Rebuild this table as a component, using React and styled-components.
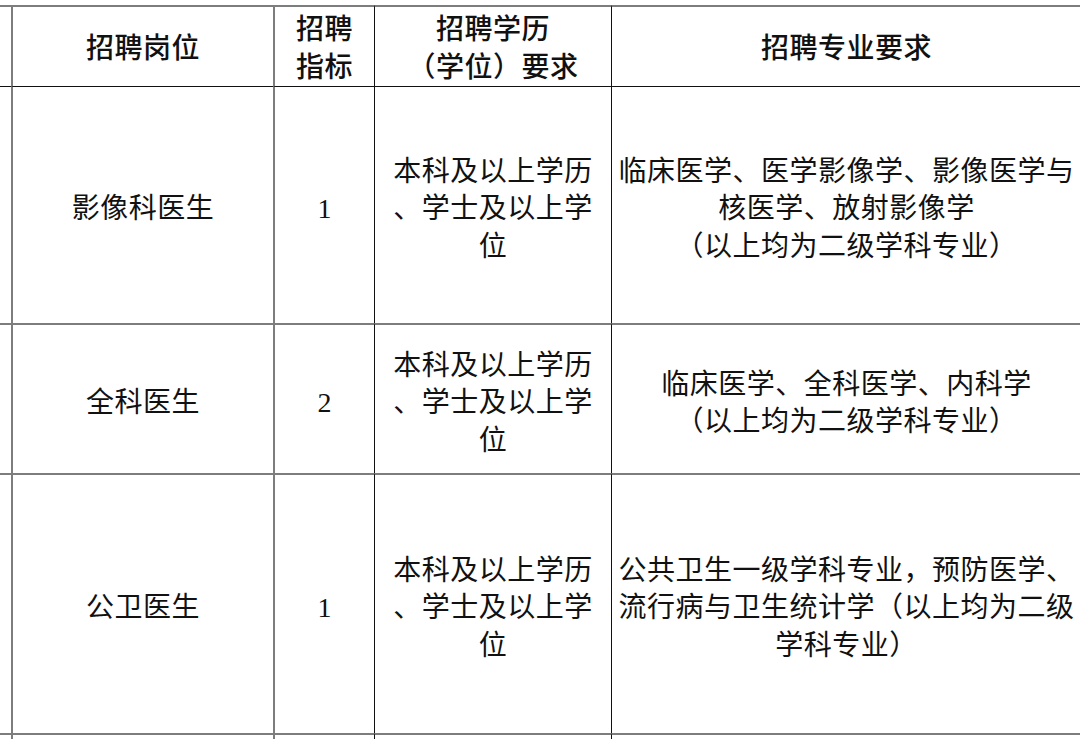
import React from 'react'
import styled, { createGlobalStyle } from 'styled-components'

const GlobalStyle = createGlobalStyle`
  html, body {
    margin: 0;
    padding: 0;
    background: #fff;
    overflow: hidden;
  }
`

const GRAY = '2px solid #7d7d7d'
const DARK = '1px solid #111'

const Sheet = styled.div`
  display: grid;
  grid-template-columns: 11px 262px 101px 237px 470px;
  grid-template-rows: 81px 237px 150px 260px 6px;
  margin-top: 5px;
  width: 1081px;
  overflow: hidden;
`

const Cell = styled.div`
  box-sizing: border-box;
  display: flex;
  align-items: center;
  justify-content: center;
  text-align: center;
  white-space: nowrap;
  color: #111;
  padding-top: ${(p) => (p.$head ? '0' : '8px')};
  border-left: ${(p) => p.$left || 'none'};
  border-top: ${(p) => p.$top || 'none'};
  font-family: ${(p) =>
    p.$head
      ? '"Noto Sans CJK SC", "Noto Sans", sans-serif'
      : '"Liberation Serif", "Noto Sans CJK SC", serif'};
  font-weight: ${(p) => (p.$head ? 500 : 400)};
  font-size: 28px;
  line-height: 37.5px;
  letter-spacing: ${(p) => (p.$num ? '0' : '0.5px')};
`

const colBorders = [null, GRAY, GRAY, DARK, DARK]
const rowBorders = [GRAY, DARK, GRAY, GRAY, GRAY]

const lines = (arr) =>
  arr.map((t, i) => (
    <React.Fragment key={i}>
      {i > 0 && <br />}
      {t}
    </React.Fragment>
  ))

const header = [
  '',
  ['招聘岗位'],
  ['招聘', '指标'],
  ['招聘学历', '（学位）要求'],
  ['招聘专业要求'],
]

const rows = [
  [
    '',
    ['影像科医生'],
    ['1'],
    ['本科及以上学历', '、学士及以上学', '位'],
    ['临床医学、医学影像学、影像医学与', '核医学、放射影像学', '（以上均为二级学科专业）'],
  ],
  [
    '',
    ['全科医生'],
    ['2'],
    ['本科及以上学历', '、学士及以上学', '位'],
    ['临床医学、全科医学、内科学', '（以上均为二级学科专业）'],
  ],
  [
    '',
    ['公卫医生'],
    ['1'],
    ['本科及以上学历', '、学士及以上学', '位'],
    ['公共卫生一级学科专业，预防医学、', '流行病与卫生统计学（以上均为二级', '学科专业）'],
  ],
  ['', '', '', '', ''],
]

export default function App() {
  return (
    <>
      <GlobalStyle />
      <Sheet>
        {header.map((c, ci) => (
          <Cell key={'h' + ci} $head $left={colBorders[ci]} $top={rowBorders[0]}>
            <div>{c ? lines(c) : null}</div>
          </Cell>
        ))}
        {rows.map((r, ri) =>
          r.map((c, ci) => (
            <Cell
              key={ri + '-' + ci}
              $num={ci === 2}
              $left={colBorders[ci]}
              $top={rowBorders[ri + 1]}
            >
              <div>{c ? lines(c) : null}</div>
            </Cell>
          ))
        )}
      </Sheet>
    </>
  )
}
